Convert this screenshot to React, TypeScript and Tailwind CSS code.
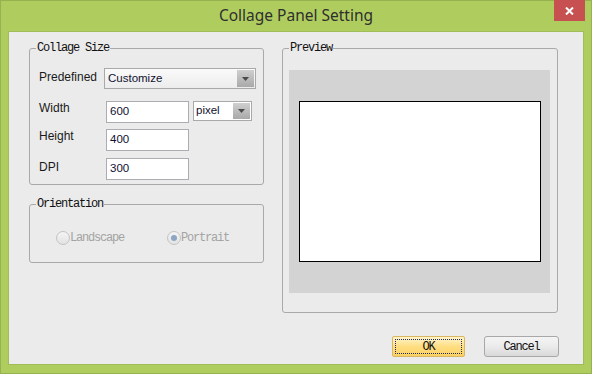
import React from 'react';

const mono = "font-['Liberation_Mono','DejaVu_Sans_Mono',monospace]";
const sans = "font-['Liberation_Sans',Arial,sans-serif]";

const Arrow: React.FC = () => (
  <svg width="7" height="4" viewBox="0 0 7 4">
    <path d="M0 0 H7 L3.5 4 Z" fill="#4a4a4a" />
  </svg>
);

const GroupBox: React.FC<{ title: string; className?: string; children?: React.ReactNode }> = ({
  title,
  className,
  children,
}) => (
  <div className={`relative border border-[#a9a9a9] rounded-[3px] ${className ?? ''}`}>
    <span
      className={`absolute -top-[8px] left-[6px] px-[1px] bg-[#ebebeb] text-[12px] leading-[14px] tracking-[-1.2px] text-[#111] ${mono}`}
    >
      {title}
    </span>
    {children}
  </div>
);

const TextBox: React.FC<{ value: string }> = ({ value }) => (
  <div className="ml-[2px] w-[83px] h-[22px] bg-white border border-[#abadb3] pl-[3px] flex items-center text-[11.5px] text-[#101030]">
    {value}
  </div>
);

const Radio: React.FC<{ label: string; checked?: boolean }> = ({ label, checked }) => (
  <div className="flex items-center">
    <span className="w-[14px] h-[14px] rounded-full border border-[#c4c4c4] bg-gradient-to-b from-[#f4f4f4] to-[#e2e2e2] flex items-center justify-center">
      {checked && <span className="w-[6px] h-[6px] rounded-full bg-[#8ea6c4]" />}
    </span>
    <span className={`text-[12px] tracking-[-1.2px] text-[#a3a3a3] ${mono}`}>{label}</span>
  </div>
);

export default function App() {
  return (
    <div className={`w-[592px] h-[374px] bg-[#afcd5f] border border-[#94b24f] flex flex-col ${sans}`}>
      {/* Title bar */}
      <div className="relative h-[30px] flex items-center justify-center">
        <span className="text-[15.5px] text-[#2f2f2f] font-['Noto_Sans',sans-serif]">
          Collage Panel Setting
        </span>
        <div className="absolute -top-[1px] right-[6px] w-[31px] h-[21px] bg-[#c75050] flex items-center justify-center">
          <svg width="9" height="8" viewBox="0 0 9 8">
            <path d="M1 0.5 L8 7.5 M8 0.5 L1 7.5" stroke="white" strokeWidth="2" />
          </svg>
        </div>
      </div>

      {/* Client area */}
      <div className="flex-1 mx-[7px] mb-[8px] bg-[#ebebeb] border border-[#9fbd58] flex flex-col pl-[20px] pt-[16px]">
        <div className="flex gap-[18px]">
          <div className="w-[235px] flex flex-col gap-[19px]">
            <GroupBox title="Collage Size" className="h-[137px] pl-[9px] pt-[19px] flex flex-col">
              <div className="flex items-start h-[21px]">
                <span className="w-[65px] mt-[2px] text-[12px] leading-[14px] text-[#1a1a1a]">Predefined</span>
                <div className="w-[152px] h-[21px] border border-[#a9a9a9] bg-gradient-to-b from-[#fafafa] to-[#ececec] flex items-center justify-between pl-[3px] pr-[1px] text-[11.5px] text-[#101030]">
                  Customize
                  <span className="w-[17px] h-[17px] bg-gradient-to-b from-[#cfcfcf] to-[#a9a9a9] flex items-center justify-center">
                    <Arrow />
                  </span>
                </div>
              </div>
              <div className="flex items-start mt-[12px]">
                <span className="w-[65px] text-[12px] leading-[14px] text-[#1a1a1a]">Width</span>
                <TextBox value="600" />
                <div className="ml-[4px] w-[59px] h-[20px] border border-[#a9a9a9] bg-white flex items-center justify-between pl-[2px] pr-[1px] text-[11.5px] text-[#101030]">
                  pixel
                  <span className="w-[17px] h-[16px] bg-gradient-to-b from-[#cfcfcf] to-[#a9a9a9] flex items-center justify-center">
                    <Arrow />
                  </span>
                </div>
              </div>
              <div className="flex items-start mt-[6px]">
                <span className="w-[65px] text-[12px] leading-[14px] text-[#1a1a1a]">Height</span>
                <TextBox value="400" />
              </div>
              <div className="flex items-start mt-[7px]">
                <span className="w-[65px] mt-[2px] text-[12px] leading-[14px] text-[#1a1a1a]">DPI</span>
                <TextBox value="300" />
              </div>
            </GroupBox>

            <GroupBox title="Orientation" className="h-[59px] pl-[26px] pt-[24px]">
              <div className="flex">
                <div className="w-[111px]">
                  <Radio label="Landscape" />
                </div>
                <Radio label="Portrait" checked />
              </div>
            </GroupBox>
          </div>

          <GroupBox title="Preview" className="w-[276px] h-[265px] pl-[6px] pt-[21px]">
            <div className="w-[261px] h-[223px] bg-[#d3d3d3] flex items-center justify-center pl-[1px]">
              <div className="w-[242px] h-[161px] bg-white border border-black" />
            </div>
          </GroupBox>
        </div>

        {/* Buttons */}
        <div className="flex justify-end gap-[19px] mt-[23px] pr-[24px]">
          <button
            className={`w-[73px] h-[21px] rounded-[2px] border border-[#d8b663] bg-gradient-to-b from-[#fff4c8] via-[#ffde82] to-[#fbd160] p-[2px] ${mono}`}
          >
            <span className="w-full h-full border border-dotted border-[#1c2a66] flex items-center justify-center text-[12px] tracking-[-1.2px] text-[#111]">
              OK
            </span>
          </button>
          <button
            className={`w-[75px] h-[21px] rounded-[3px] border border-[#a8a8a8] bg-gradient-to-b from-[#f4f4f4] via-[#ebebeb] to-[#d9d9d9] flex items-center justify-center text-[12px] tracking-[-1.2px] text-[#111] ${mono}`}
          >
            Cancel
          </button>
        </div>
      </div>
    </div>
  );
}
